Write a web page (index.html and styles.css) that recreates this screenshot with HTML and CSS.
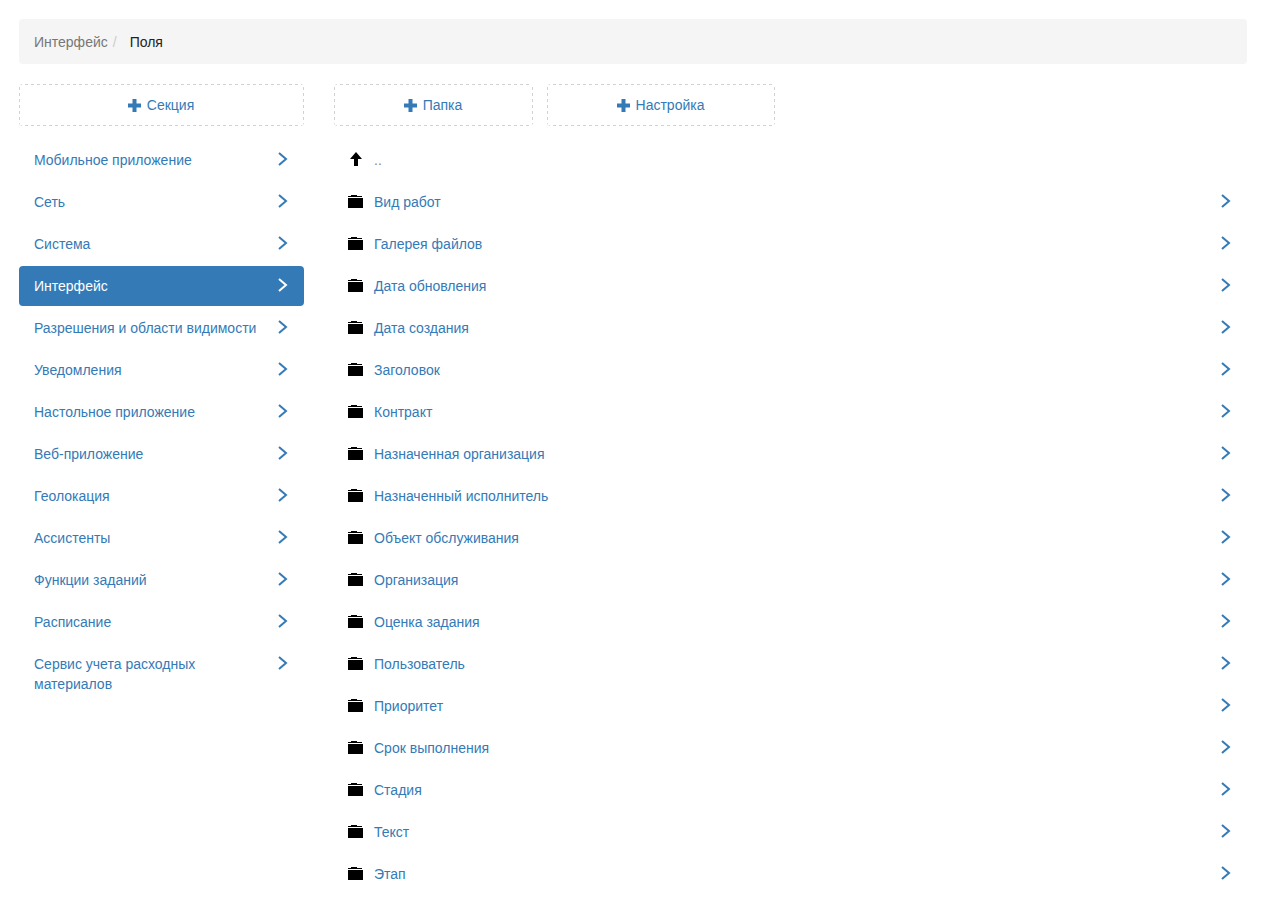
FILE: index.html
```html
<!DOCTYPE html>
<html lang="ru">
<head>
<meta charset="utf-8">
<title>Поля</title>
<link rel="stylesheet" href="styles.css">
<svg class="defs" width="0" height="0" aria-hidden="true">
  <symbol id="chev" viewBox="0 0 12 16"><path d="M2 2l7 6-7 6" fill="none" stroke="currentColor" stroke-width="2"/></symbol>
  <symbol id="plus" viewBox="0 0 13 13"><path d="M4.500 0h4v4.500H13v4H8.500V13h-4V8.500H0v-4h4.500z" fill="currentColor"/></symbol>
  <symbol id="folder" viewBox="0 0 15 13"><path d="M3 0h6v1h5v1H0V1h3zM0 3h15v10H0z" fill="#000"/></symbol>
  <symbol id="up" viewBox="0 0 12 14"><path d="M6 0l6 7H8v7H4V7H0z" fill="#000"/></symbol>
</svg>
</head>
<body>
<nav class="crumbs"><span class="crumb-link">Интерфейс</span><span class="crumb-sep">/</span><span class="crumb-current">Поля</span></nav>
<div class="columns">
  <aside class="left">
    <div class="actions">
      <a class="add add-section"><svg class="plus"><use href="#plus"/></svg>Секция</a>
    </div>
    <ul class="list">
      <li class="item"><span class="label">Мобильное приложение</span><svg class="chev"><use href="#chev"/></svg></li>
      <li class="item"><span class="label">Сеть</span><svg class="chev"><use href="#chev"/></svg></li>
      <li class="item"><span class="label">Система</span><svg class="chev"><use href="#chev"/></svg></li>
      <li class="item active"><span class="label">Интерфейс</span><svg class="chev"><use href="#chev"/></svg></li>
      <li class="item"><span class="label">Разрешения и области видимости</span><svg class="chev"><use href="#chev"/></svg></li>
      <li class="item"><span class="label">Уведомления</span><svg class="chev"><use href="#chev"/></svg></li>
      <li class="item"><span class="label">Настольное приложение</span><svg class="chev"><use href="#chev"/></svg></li>
      <li class="item"><span class="label">Веб-приложение</span><svg class="chev"><use href="#chev"/></svg></li>
      <li class="item"><span class="label">Геолокация</span><svg class="chev"><use href="#chev"/></svg></li>
      <li class="item"><span class="label">Ассистенты</span><svg class="chev"><use href="#chev"/></svg></li>
      <li class="item"><span class="label">Функции заданий</span><svg class="chev"><use href="#chev"/></svg></li>
      <li class="item"><span class="label">Расписание</span><svg class="chev"><use href="#chev"/></svg></li>
      <li class="item"><span class="label">Сервис учета расходных материалов</span><svg class="chev"><use href="#chev"/></svg></li>
    </ul>
  </aside>
  <main class="right">
    <div class="actions">
      <a class="add add-folder"><svg class="plus"><use href="#plus"/></svg>Папка</a>
      <a class="add add-setting"><svg class="plus"><use href="#plus"/></svg>Настройка</a>
    </div>
    <ul class="list">
      <li class="item parent"><svg class="up"><use href="#up"/></svg><span class="label dots">..</span></li>
      <li class="item"><svg class="folder"><use href="#folder"/></svg><span class="label">Вид работ</span><svg class="chev"><use href="#chev"/></svg></li>
      <li class="item"><svg class="folder"><use href="#folder"/></svg><span class="label">Галерея файлов</span><svg class="chev"><use href="#chev"/></svg></li>
      <li class="item"><svg class="folder"><use href="#folder"/></svg><span class="label">Дата обновления</span><svg class="chev"><use href="#chev"/></svg></li>
      <li class="item"><svg class="folder"><use href="#folder"/></svg><span class="label">Дата создания</span><svg class="chev"><use href="#chev"/></svg></li>
      <li class="item"><svg class="folder"><use href="#folder"/></svg><span class="label">Заголовок</span><svg class="chev"><use href="#chev"/></svg></li>
      <li class="item"><svg class="folder"><use href="#folder"/></svg><span class="label">Контракт</span><svg class="chev"><use href="#chev"/></svg></li>
      <li class="item"><svg class="folder"><use href="#folder"/></svg><span class="label">Назначенная организация</span><svg class="chev"><use href="#chev"/></svg></li>
      <li class="item"><svg class="folder"><use href="#folder"/></svg><span class="label">Назначенный исполнитель</span><svg class="chev"><use href="#chev"/></svg></li>
      <li class="item"><svg class="folder"><use href="#folder"/></svg><span class="label">Объект обслуживания</span><svg class="chev"><use href="#chev"/></svg></li>
      <li class="item"><svg class="folder"><use href="#folder"/></svg><span class="label">Организация</span><svg class="chev"><use href="#chev"/></svg></li>
      <li class="item"><svg class="folder"><use href="#folder"/></svg><span class="label">Оценка задания</span><svg class="chev"><use href="#chev"/></svg></li>
      <li class="item"><svg class="folder"><use href="#folder"/></svg><span class="label">Пользователь</span><svg class="chev"><use href="#chev"/></svg></li>
      <li class="item"><svg class="folder"><use href="#folder"/></svg><span class="label">Приоритет</span><svg class="chev"><use href="#chev"/></svg></li>
      <li class="item"><svg class="folder"><use href="#folder"/></svg><span class="label">Срок выполнения</span><svg class="chev"><use href="#chev"/></svg></li>
      <li class="item"><svg class="folder"><use href="#folder"/></svg><span class="label">Стадия</span><svg class="chev"><use href="#chev"/></svg></li>
      <li class="item"><svg class="folder"><use href="#folder"/></svg><span class="label">Текст</span><svg class="chev"><use href="#chev"/></svg></li>
      <li class="item"><svg class="folder"><use href="#folder"/></svg><span class="label">Этап</span><svg class="chev"><use href="#chev"/></svg></li>
    </ul>
  </main>
</div>
</body>
</html>
```
FILE: styles.css
```css
* { box-sizing: border-box; }
html, body { margin: 0; background: #fff; }
body {
  padding: 19px 20px 0 19px;
  font: 14px/20px "Liberation Sans", Arial, sans-serif;
  color: #333;
}
.defs { position: absolute; }
.crumbs {
  height: 45px;
  padding: 13px 15px 12px;
  background: #f5f5f5;
  border-radius: 4px;
  margin-bottom: 20px;
  display: flex;
}
.crumb-link { color: #777; }
.crumb-sep { color: #ccc; margin-left: 5px; }
.crumb-current { color: #222; margin-left: 13px; }
.columns { display: flex; gap: 30px; }
.left { width: 285px; flex: none; }
.right { flex: 1; min-width: 0; }
.actions { display: flex; gap: 14px; margin-bottom: 14px; }
.add {
  height: 42px;
  display: flex;
  align-items: center;
  justify-content: center;
  border-radius: 4px;
  color: #337ab7;
  background:
    repeating-linear-gradient(90deg, #d2d2d2 0 3px, transparent 3px 6px) 0 0 / 100% 1px no-repeat,
    repeating-linear-gradient(90deg, #d2d2d2 0 3px, transparent 3px 6px) 0 100% / 100% 1px no-repeat,
    repeating-linear-gradient(0deg, #d2d2d2 0 3px, transparent 3px 6px) 0 0 / 1px 100% no-repeat,
    repeating-linear-gradient(0deg, #d2d2d2 0 3px, transparent 3px 6px) 100% 0 / 1px 100% no-repeat;
}
.add-section { width: 285px; }
.add-folder { width: 199px; }
.add-setting { width: 228px; }
.plus { width: 13px; height: 13px; margin: 0 6px 0 -1px; color: #337ab7; }
.list { list-style: none; margin: 0; padding: 0; display: flex; flex-direction: column; gap: 2px; }
.item {
  display: flex;
  align-items: flex-start;
  padding: 10px 15px;
  border-radius: 4px;
  color: #337ab7;
}
.item .label { flex: 1; min-width: 0; padding-right: 15px; }
.item.active { background: #337ab7; color: #fff; }
.chev { width: 12px; height: 16px; flex: none; margin: 1px 0 0; color: #337ab7; }
.active .chev { color: #fff; }
.folder { width: 15px; height: 13px; flex: none; margin: 3px 11px 0 -1px; }
.up { width: 12px; height: 14px; flex: none; margin: 2px 12px 0 1px; }
.dots { color: #888; }
```
